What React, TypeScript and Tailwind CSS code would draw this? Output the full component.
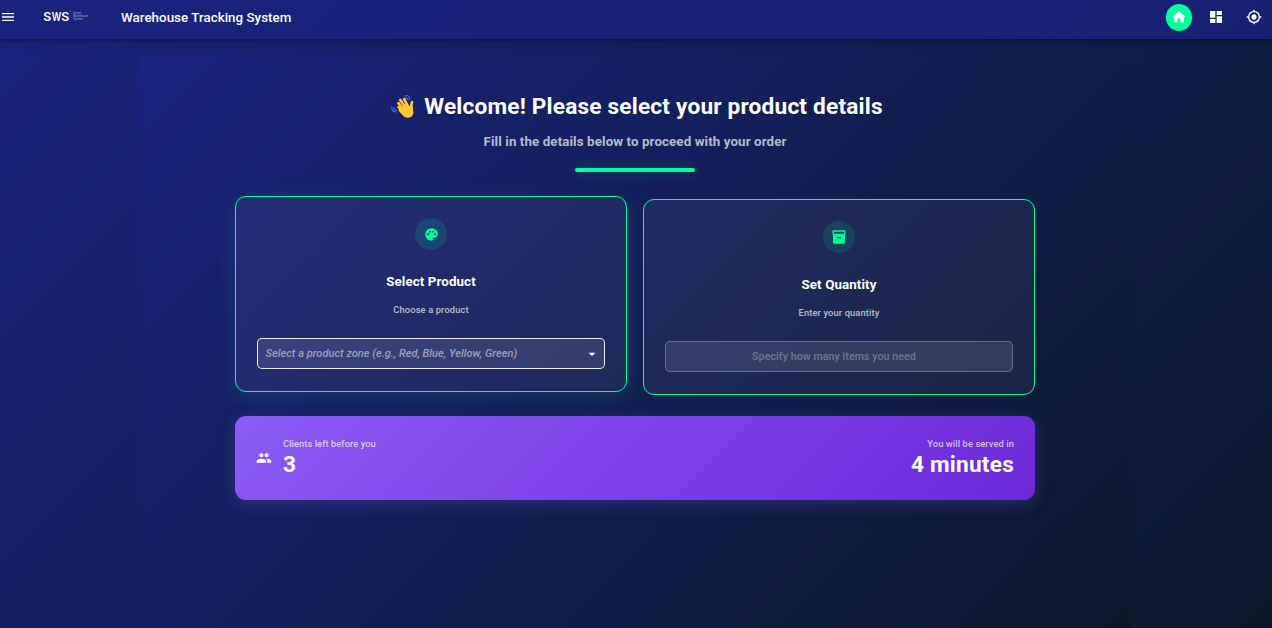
import type { ReactNode } from "react";
import { MdArrowDropDown, MdDashboard, MdGroup, MdHome, MdInventory2, MdMenu, MdMyLocation, MdPalette } from "react-icons/md";

function Logo() {
  return (
    <div className="ml-[27px] flex w-[49px] items-center text-white">
      <svg width="49" height="16" viewBox="0 0 49 16" className="shrink-0">
        <g fontFamily="Inter" fontWeight="600" fontSize="11.5" fill="#fff">
          <text x="0.3" y="12.8" textLength="8" lengthAdjust="spacingAndGlyphs">S</text>
          <text x="8.7" y="12.8" textLength="9.5" lengthAdjust="spacingAndGlyphs">W</text>
          <text x="18.3" y="12.8" textLength="8" lengthAdjust="spacingAndGlyphs">S</text>
        </g>
        <rect x="26" y="2" width="2" height="2" fill="#23642f" />
        <g fontFamily="Roboto" fontSize="3.1" fill="#a3a8d6">
          <text x="30" y="6.4">Smart</text>
          <text x="30" y="9.4">Warehouse</text>
          <text x="30" y="12.4">System</text>
        </g>
      </svg>
    </div>
  );
}

function WavingHand() {
  return (
    <svg width="25" height="25" viewBox="0 0 25 25" fill="none" className="shrink-0">
      <path d="M13.6 2.2c2.6-1.5 5-.3 5.3 2.8M14.2 4.5c1.5-.9 2.7-.2 2.9 1.5" stroke="#4478dd" strokeWidth="1.1" strokeLinecap="round" />
      <path d="M.9 13.2c-.5 2.8 1.1 4.9 4 4.7M2.9 13.3c-.2 1.8.7 2.8 2.3 2.8" stroke="#4478dd" strokeWidth="1.1" strokeLinecap="round" />
      <g stroke="#ffc83d" strokeLinecap="round" strokeWidth="2.7">
        <path d="M7.5 13.2l5.5 6" />
        <path d="M7.4 9.2l6.5 8" />
        <path d="M9.3 6l6.2 9" />
        <path d="M13.2 5.2l4.7 9" />
        <path d="M21 8.2c-1.3 2.1-.6 4-.3 7" />
      </g>
      <path d="M8.3 14.2L15 9.7l3 2.2 2-.4c1.9 3.7 3.4 6.5 1.7 9.5-1.7 3.1-5.9 3.5-8.7 1.4-2-1.5-3.6-3.6-5.5-5.7z" fill="#ffc83d" />
      <path d="M9 10.8l3.2 3.8M11.8 9.2l3 4M14.4 8.6l2 3.7" stroke="#e0a02b" strokeWidth=".4" strokeLinecap="round" />
    </svg>
  );
}

function Card({ icon, title, hint, raised, children }: { icon: ReactNode; title: string; hint: string; raised?: boolean; children: ReactNode }) {
  return (
    <section
      className={
        "flex h-[196px] flex-1 flex-col items-center rounded-[11px] border border-[#00ff9d] bg-white/5 px-[21px] pt-[21px] " +
        (raised ? "mb-[3px] shadow-[0_5px_21px_rgba(0,255,157,0.12)]" : "mt-[3px]")
      }
    >
      <div className="flex size-[32px] items-center justify-center rounded-full bg-[#00ff9d]/12 text-[#00ff9d]">{icon}</div>
      <h2 className="mt-[21px] text-[13.33px] leading-[21px] font-bold tracking-[0.1px] text-white">{title}</h2>
      <p className="mt-[11px] text-[9.33px] leading-[14px] font-medium tracking-[0.12px] text-white/70">{hint}</p>
      {children}
    </section>
  );
}

export default function App() {
  return (
    <div className="flex h-[628px] w-full flex-col overflow-hidden bg-[linear-gradient(135deg,#1a237e_0%,#0a1929_100%)] font-['Roboto',sans-serif]">
      <header className="z-10 flex h-[39px] shrink-0 items-center bg-[linear-gradient(135deg,#1a237e,#182073)] pb-[5px] text-white shadow-[0_1px_3px_rgba(0,0,0,0.3),0_3px_7px_rgba(0,0,0,0.2)]">
        <MdMenu size={16} className="shrink-0" />
        <div className="-mt-[3px]">
          <Logo />
        </div>
        <h1 className="mt-px ml-[29px] text-[13.33px] leading-[21px] font-medium tracking-[0.04px]">Warehouse Tracking System</h1>
        <nav className="mr-[10px] ml-auto flex items-center">
          <span className="flex h-[27px] w-[26px] items-center justify-center rounded-full bg-[#00ff9d]">
            <MdHome size={16} />
          </span>
          <MdDashboard size={16} className="ml-[16px]" />
          <MdMyLocation size={16} className="ml-[22px]" />
        </nav>
      </header>

      <main className="mt-[16px] mr-[140px] ml-[138px] flex flex-1 flex-col items-center bg-[linear-gradient(135deg,#1a237e_0%,#0a1929_100%)]">
        <div className="mt-[37px] flex h-[28px] items-center pl-[4px]">
          <WavingHand />
          <h2 className="mt-px ml-[8px] text-[22.67px] leading-[28px] font-bold tracking-[0.18px] whitespace-nowrap text-white">Welcome! Please select your product details</h2>
        </div>
        <p className="mt-[12px] text-[13.33px] leading-[20px] font-bold tracking-[0.1px] text-white/70">Fill in the details below to proceed with your order</p>
        <div className="mt-[16px] h-[4px] w-[120px] rounded-[2px] bg-[#00ff9d] shadow-[0_0_13px_rgba(0,255,157,0.25)]" />

        <div className="mt-[24px] flex w-[800px] gap-[16px]">
          <Card raised icon={<MdPalette size={15} />} title="Select Product" hint="Choose a product">
            <button className="mt-[21px] flex h-[31px] w-full items-center justify-between rounded-[5px] border border-white/90 bg-white/10 pr-[4px] pl-[7.5px] text-white">
              <span className="pt-px text-[11px] font-medium tracking-[0.03px] text-white/50 italic">Select a product zone (e.g., Red, Blue, Yellow, Green)</span>
              <MdArrowDropDown size={16} />
            </button>
          </Card>
          <Card icon={<MdInventory2 size={16} />} title="Set Quantity" hint="Enter your quantity">
            <input
              className="mt-[21px] h-[31px] w-full rounded-[5px] border border-white/25 bg-white/10 pr-[10px] text-center text-[10.67px] font-medium tracking-[0.06px] text-white placeholder:text-white/30"
              placeholder="Specify how many items you need"
            />
          </Card>
        </div>

        <section className="mt-[21px] flex h-[84px] w-[800px] items-center justify-between rounded-[11px] bg-[linear-gradient(135deg,#8b5cf6_0%,#6d28d9_100%)] px-[21px] text-white shadow-[0_4px_16px_rgba(139,92,246,0.25)]">
          <div className="flex items-center">
            <MdGroup size={16} />
            <div className="-mt-px ml-[11px]">
              <p className="text-[9.33px] leading-[13px] font-medium tracking-[0.05px] text-white/70">Clients left before you</p>
              <p className="mt-px text-[22.67px] leading-[28px] font-bold">3</p>
            </div>
          </div>
          <div className="-mt-px text-right">
            <p className="text-[9.33px] leading-[13px] font-medium tracking-[0.08px] text-white/70">You will be served in</p>
            <p className="mt-px text-[22.67px] leading-[28px] font-bold tracking-[0.2px]">4 minutes</p>
          </div>
        </section>
      </main>
    </div>
  );
}
